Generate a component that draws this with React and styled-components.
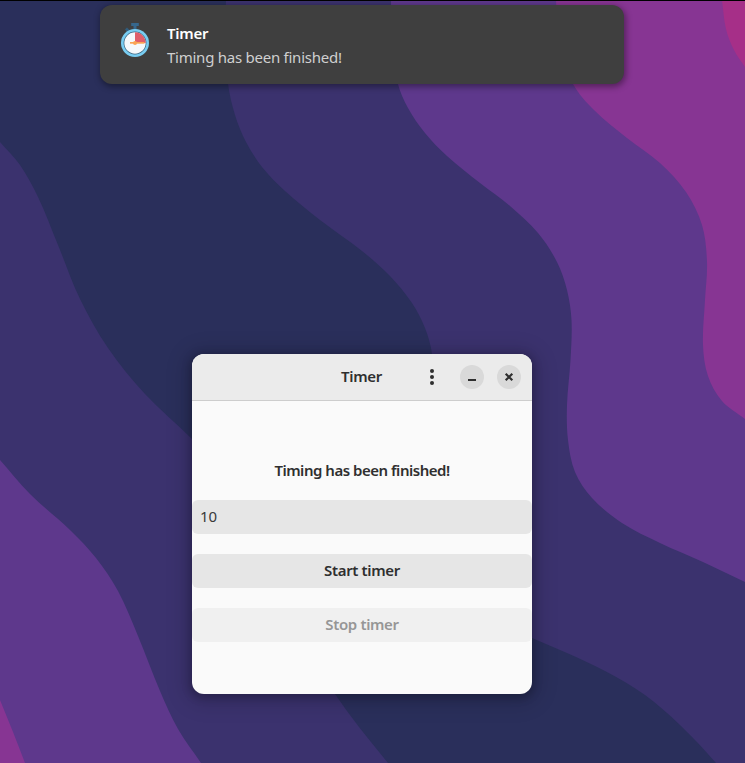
import React from "react";
import styled, { createGlobalStyle } from "styled-components";

const GlobalStyle = createGlobalStyle`
  * { box-sizing: border-box; }
  body { margin: 0; overflow: hidden; background: #2a2f5b; font-family: "Noto Sans", sans-serif; }
`;

const Desktop = styled.main`
  position: relative;
  width: 745px;
  height: 763px;
  overflow: hidden;
  border-top: 1px solid #000;
`;

const WallpaperSvg = styled.svg`
  position: absolute;
  left: 0;
  top: -1px;
  display: block;
`;

const Notification = styled.section`
  position: absolute;
  left: 100px;
  top: 4px;
  width: 524px;
  height: 79px;
  display: flex;
  gap: 17px;
  padding: 16px 20px;
  border-radius: 12px;
  background: #3f3f3f;
  box-shadow: 1px 2px 6px 1px rgba(0, 0, 0, 0.38);
`;

const StopwatchSvg = styled.svg`
  flex: none;
  width: 30px;
  height: 38px;
`;

const NotificationText = styled.div`
  display: flex;
  flex-direction: column;
`;

const Label = styled.span`
  font-family: "Noto Sans", sans-serif;
  font-size: 15px;
  line-height: 24px;
  white-space: nowrap;
  font-weight: ${(p) => (p.$bold ? 600 : 400)};
  letter-spacing: ${(p) => p.$track ?? 0}px;
  color: ${(p) => p.$color || "#2f2f2f"};
`;

const Window = styled.section`
  position: absolute;
  left: 192px;
  top: 353px;
  width: 340px;
  height: 340px;
  display: flex;
  flex-direction: column;
  border-radius: 12px;
  background: #fafafa;
  box-shadow: 0 2px 8px 2px rgba(0, 0, 0, 0.22), 0 3px 20px 8px rgba(0, 0, 0, 0.13);
`;

const HeaderBar = styled.header`
  display: grid;
  grid-template-columns: 1fr auto 1fr;
  align-items: center;
  height: 47px;
  padding: 0 11px;
  border-bottom: 1px solid #cdcdcd;
  border-radius: 12px 12px 0 0;
  background: #ebebeb;
`;

const Controls = styled.div`
  grid-column: 3;
  display: flex;
  justify-content: flex-end;
  gap: 13px;
`;

const Title = styled(Label)`
  grid-column: 2;
  padding: 0 1px 2px 0;
`;

const ControlButton = styled.button`
  display: grid;
  place-items: center;
  width: 24px;
  height: 24px;
  padding: 0;
  border: 0;
  border-radius: 50%;
  background: ${(p) => (p.$flat ? "transparent" : "#d9d9d9")};
  margin-right: ${(p) => (p.$flat ? 3 : 0)}px;
`;

const Content = styled.div`
  flex: 1;
  display: flex;
  flex-direction: column;
  align-items: stretch;
  gap: 20px;
  padding-top: 57px;
`;

const Status = styled(Label)`
  height: 22px;
  text-align: center;
`;

const Entry = styled.input`
  width: 100%;
  height: 34px;
  padding: 0 8px 2px;
  border: 0;
  border-radius: 6px;
  outline: 0;
  background: #e6e6e6;
  color: #3a3a3a;
  font: 15px "Noto Sans", sans-serif;
`;

const ActionButton = styled.button`
  display: flex;
  align-items: center;
  justify-content: center;
  height: 34px;
  padding: 0 0 2px;
  border: 0;
  border-radius: 6px;
  background: ${(p) => (p.disabled ? "#f0f0f0" : "#e6e6e6")};
`;

// Smooth curve through a list of points; handle lengths follow each segment's length.
function curve(points) {
  const tangents = points.map((p, i) => {
    const a = points[i - 1] || p;
    const b = points[i + 1] || p;
    const length = Math.hypot(b[0] - a[0], b[1] - a[1]);
    return [(b[0] - a[0]) / length, (b[1] - a[1]) / length];
  });
  let d = `M${points[0][0]} ${points[0][1]}`;
  for (let i = 0; i < points.length - 1; i += 1) {
    const [x1, y1] = points[i];
    const [x2, y2] = points[i + 1];
    const h = Math.hypot(x2 - x1, y2 - y1) / 3;
    d += `C${x1 + tangents[i][0] * h} ${y1 + tangents[i][1] * h} ${x2 - tangents[i + 1][0] * h} ${y2 - tangents[i + 1][1] * h} ${x2} ${y2}`;
  }
  return d;
}

const waves = [
  { fill: "#3b326e", close: "V0Z", points: [[226, 0], [225, 45], [228, 84], [235, 115], [246, 142], [262, 167], [285, 191], [320, 220], [362, 251], [390, 276], [412, 303], [425, 328], [432, 354], [437, 420], [450, 560], [505, 625], [532, 638], [567, 653], [605, 671], [645, 695], [680, 725], [716, 763], [745, 800]] },
  { fill: "#5e388c", close: "V0Z", points: [[391, 0], [392, 45], [398, 84], [408, 108], [425, 133], [447, 156], [480, 183], [510, 206], [538, 233], [557, 262], [567, 290], [571.5, 320], [570.5, 360], [567, 405], [568, 440], [575, 472], [592, 498], [622, 523], [660, 543], [703, 562], [745, 582]] },
  { fill: "#873593", close: "V0Z", points: [[556, 0], [559, 45], [573, 84], [594, 110], [627, 138], [660, 163], [686, 192], [702, 225], [707, 262], [705, 300], [703, 345], [708, 376], [722, 401], [745, 419]] },
  { fill: "#a62f88", close: "V0Z", points: [[722, 0], [726, 29], [734, 50], [745, 67]] },
  { fill: "#3b326e", close: "H0Z", points: [[0, 142], [20, 165], [38, 197], [58, 245], [80, 299], [108, 348], [145, 394], [192, 439], [230, 480], [310, 655], [335, 694], [359, 727], [388, 763]] },
  { fill: "#5e388c", close: "H0Z", points: [[0, 460], [30, 494], [70, 530], [96, 558], [118, 591], [138, 636], [160, 691], [178, 729], [201, 763]] },
  { fill: "#873593", close: "H0Z", points: [[0, 700], [13, 732], [25, 763]] },
];

function Wallpaper() {
  return (
    <WallpaperSvg width="745" height="763" viewBox="0 0 745 763">
      <path fill="#2a2f5b" d="M0 0H745V763H0Z" />
      {waves.map((w, i) => (
        <path key={i} fill={w.fill} d={curve(w.points) + w.close} />
      ))}
    </WallpaperSvg>
  );
}

function Stopwatch() {
  return (
    <StopwatchSvg viewBox="0 0 30 38">
      <path d="M11.2 2h7.6v3h-2.3v4h-3V5h-2.3z" fill="#36678c" />
      <path d="m5 8.5 2-2 3 3-2 2z" fill="#315d7d" />
      <circle cx="15" cy="22" r="14" fill="#78cdf2" />
      <circle cx="15" cy="22" r="11.4" fill="#39647f" />
      <circle cx="15" cy="22" r="10.7" fill="#f5f9fc" />
      <path d="M15 22V11.3A10.7 10.7 0 0 1 25.7 22z" fill="#df5e6b" />
      <path d="M10 21h14.5v1.7H10z" fill="#fba454" />
      <circle cx="15" cy="21.9" r="2" fill="#fba454" />
    </StopwatchSvg>
  );
}

export default function App() {
  return (
    <Desktop>
      <GlobalStyle />
      <Wallpaper />
      <Notification>
        <Stopwatch />
        <NotificationText>
          <Label $bold $track={-0.25} $color="#ffffff">Timer</Label>
          <Label $track={-0.25} $color="#d0d0d0">Timing has been finished!</Label>
        </NotificationText>
      </Notification>
      <Window>
        <HeaderBar>
          <Title $bold $track={-0.25}>Timer</Title>
          <Controls>
            <ControlButton $flat aria-label="Menu">
              <svg width="16" height="16" fill="#2f2f2f"><circle cx="8" cy="2" r="2" /><circle cx="8" cy="8" r="2" /><circle cx="8" cy="14" r="2" /></svg>
            </ControlButton>
            <ControlButton aria-label="Minimize">
              <svg width="16" height="16"><path d="M4 10h8v2H4z" fill="#2f2f2f" /></svg>
            </ControlButton>
            <ControlButton aria-label="Close">
              <svg width="16" height="16"><path d="m4.7 4.7 6.6 6.6m0-6.6-6.6 6.6" stroke="#2f2f2f" strokeWidth="2.2" /></svg>
            </ControlButton>
          </Controls>
        </HeaderBar>
        <Content>
          <Status $bold $track={-0.48}>Timing has been finished!</Status>
          <Entry defaultValue="10" />
          <ActionButton><Label $bold $track={-0.35}>Start timer</Label></ActionButton>
          <ActionButton disabled><Label $bold $track={-0.35} $color="#969696">Stop timer</Label></ActionButton>
        </Content>
      </Window>
    </Desktop>
  );
}
